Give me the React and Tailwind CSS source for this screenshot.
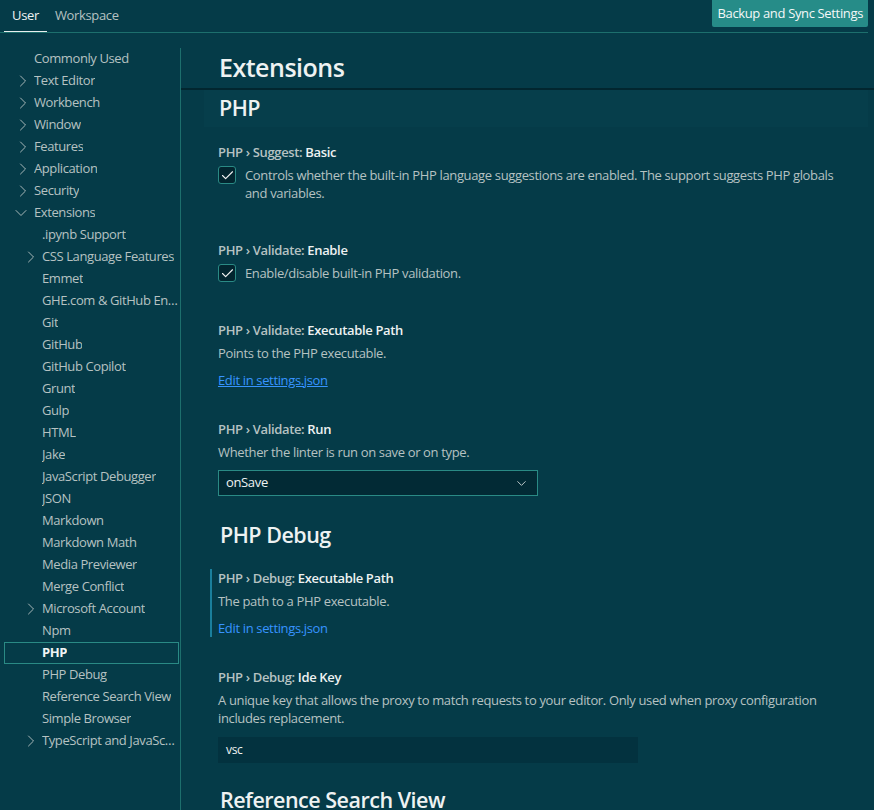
import { ChevronRight, ChevronDown, Check } from "lucide-react";

const nav = [
  { label: "Commonly Used", depth: 0 },
  { label: "Text Editor", depth: 0, chevron: "right" },
  { label: "Workbench", depth: 0, chevron: "right" },
  { label: "Window", depth: 0, chevron: "right" },
  { label: "Features", depth: 0, chevron: "right" },
  { label: "Application", depth: 0, chevron: "right" },
  { label: "Security", depth: 0, chevron: "right" },
  { label: "Extensions", depth: 0, chevron: "down" },
  { label: ".ipynb Support", depth: 1 },
  { label: "CSS Language Features", depth: 1, chevron: "right" },
  { label: "Emmet", depth: 1 },
  { label: "GHE.com & GitHub Enterprise Server Authentication", depth: 1 },
  { label: "Git", depth: 1 },
  { label: "GitHub", depth: 1 },
  { label: "GitHub Copilot", depth: 1 },
  { label: "Grunt", depth: 1 },
  { label: "Gulp", depth: 1 },
  { label: "HTML", depth: 1 },
  { label: "Jake", depth: 1 },
  { label: "JavaScript Debugger", depth: 1 },
  { label: "JSON", depth: 1 },
  { label: "Markdown", depth: 1 },
  { label: "Markdown Math", depth: 1 },
  { label: "Media Previewer", depth: 1 },
  { label: "Merge Conflict", depth: 1 },
  { label: "Microsoft Account", depth: 1, chevron: "right" },
  { label: "Npm", depth: 1 },
  { label: "PHP", depth: 1, selected: true },
  { label: "PHP Debug", depth: 1 },
  { label: "Reference Search View", depth: 1 },
  { label: "Simple Browser", depth: 1 },
  { label: "TypeScript and JavaScript Language Features", depth: 1, chevron: "right" },
];

function NavRow({ item }) {
  const pad = item.depth === 0 ? "pl-[8px]" : "pl-[16px]";
  return (
    <div
      className={`flex items-center h-[22px] ml-[4px] mr-[1px] ${pad} ${
        item.selected ? "border border-[#2a8a85] font-bold text-[#f0f4f4]" : "border border-transparent text-[#b6c2c2]"
      }`}
    >
      <span className="w-[21px] shrink-0 flex items-center">
        {item.chevron === "right" && <ChevronRight size={20} strokeWidth={1.1} className="text-[#b6c2c2]" />}
        {item.chevron === "down" && <ChevronDown size={20} strokeWidth={1.1} className="text-[#b6c2c2] -ml-[2px]" />}
      </span>
      <span className="truncate tracking-[-0.4px]">{item.label}</span>
    </div>
  );
}

function Title({ prefix, name }) {
  return (
    <div className="leading-[18px] font-semibold text-[#b6c2c2]">
      {prefix} <span className="text-[#eef2f2]">{name}</span>
    </div>
  );
}

function Item({ focused, className = "", children }) {
  return (
    <div
      className={`border-l-2 pl-[6px] ${focused ? "border-[#1a7f9c]" : "border-transparent"} ${className}`}
    >
      {children}
    </div>
  );
}

function Checkbox() {
  return (
    <span className="w-[18px] h-[18px] shrink-0 rounded-[3px] border border-[#2a8a85] bg-[#02252f] flex items-center justify-center">
      <Check size={15} strokeWidth={1.8} className="text-[#f2f2f2]" />
    </span>
  );
}

export default function App() {
  return (
    <div
      className="w-[874px] h-[810px] overflow-hidden bg-[#053b48] text-[13px] tracking-[-0.35px] text-[#b6c2c2] flex flex-col"
      style={{ fontFamily: '"Segoe UI", "Open Sans", "Noto Sans", sans-serif' }}
    >
      {/* Top bar */}
      <div className="flex justify-between items-start h-[33px] border-b border-[#1d6f6d] mr-[6px] shrink-0">
        <div className="flex items-end h-[32px] pl-[4px]">
          <div className="px-2 h-[32px] flex items-center border-b border-[#e8eeee] text-[#eef2f2]">User</div>
          <div className="px-2 h-[32px] flex items-center text-[#b6c2c2]">Workspace</div>
        </div>
        <button className="h-[27px] px-[5px] bg-[#268c88] text-[#f4f8f8] rounded-b-[2px] text-[13px]">
          Backup and Sync Settings
        </button>
      </div>

      <div className="flex flex-1 min-h-0 pt-[15px]">
        {/* Sidebar */}
        <div className="w-[181px] shrink-0 border-r border-[#1d6f6d] overflow-hidden">
          {nav.map((item) => (
            <NavRow key={item.label} item={item} />
          ))}
        </div>

        {/* Content */}
        <div className="flex-1 min-w-0 flex flex-col overflow-hidden">
          <div className="h-[43px] shrink-0 flex items-center pl-[38px] -mt-[1px] border-b-2 border-[#02262f] text-[25px] tracking-[-0.5px] font-semibold text-[#eef2f2]">
            Extensions
          </div>

          <div className="flex-1 pr-[6px]">
            <div className="ml-[23px] h-[37px] bg-[#063e4b] flex items-center pl-[15px] text-[21.5px] tracking-[-0.5px] font-semibold text-[#eef2f2]">
              PHP
            </div>

            <div className="pl-[29px] pr-[10px]">
              <Item className="pt-[16px]">
                <Title prefix="PHP › Suggest:" name="Basic" />
                <div className="flex gap-[9px] mt-[5px]">
                  <Checkbox />
                  <p className="leading-[18px]">
                    Controls whether the built-in PHP language suggestions are enabled. The support suggests PHP globals and variables.
                  </p>
                </div>
              </Item>

              <Item className="mt-[39px]">
                <Title prefix="PHP › Validate:" name="Enable" />
                <div className="flex gap-[9px] mt-[5px]">
                  <Checkbox />
                  <p className="leading-[18px]">Enable/disable built-in PHP validation.</p>
                </div>
              </Item>

              <Item className="mt-[39px]">
                <Title prefix="PHP › Validate:" name="Executable Path" />
                <p className="leading-[18px] mt-[5px]">Points to the PHP executable.</p>
                <a className="block leading-[18px] mt-[9px] text-[#3794ff] underline">Edit in settings.json</a>
              </Item>

              <Item className="mt-[31px]">
                <Title prefix="PHP › Validate:" name="Run" />
                <p className="leading-[18px] mt-[5px]">Whether the linter is run on save or on type.</p>
                <div className="mt-[9px] w-[320px] h-[26px] border border-[#2a8a85] bg-[#022a35] flex items-center justify-between pl-[7px] pr-[8px] text-[#eef2f2]">
                  <span>onSave</span>
                  <ChevronDown size={15} strokeWidth={1.4} className="text-[#d8dede]" />
                </div>
              </Item>

              <div className="mt-[24px] pl-[10px] h-[30px] flex items-center text-[21.5px] tracking-[-0.5px] font-semibold text-[#eef2f2]">
                PHP Debug
              </div>

              <Item focused className="mt-[19px]">
                <Title prefix="PHP › Debug:" name="Executable Path" />
                <p className="leading-[18px] mt-[5px]">The path to a PHP executable.</p>
                <a className="block leading-[18px] mt-[9px] text-[#3794ff]">Edit in settings.json</a>
              </Item>

              <Item className="mt-[31px]">
                <Title prefix="PHP › Debug:" name="Ide Key" />
                <p className="leading-[18px] mt-[5px]">
                  A unique key that allows the proxy to match requests to your editor. Only used when proxy configuration includes replacement.
                </p>
                <div className="mt-[10px] w-[420px] h-[26px] bg-[#03323f] flex items-center pl-[8px] text-[12px] text-[#eef2f2]">
                  vsc
                </div>
              </Item>

              <div className="mt-[22px] pl-[10px] h-[30px] flex items-center text-[21.5px] tracking-[-0.5px] font-semibold text-[#eef2f2]">
                Reference Search View
              </div>
            </div>
          </div>
        </div>
      </div>
    </div>
  );
}
